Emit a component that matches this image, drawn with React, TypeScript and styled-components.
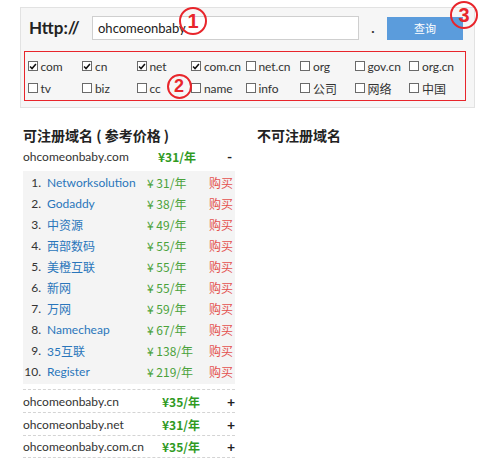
import React from "react";
import styled, { createGlobalStyle } from "styled-components";

const Global = createGlobalStyle`
  html, body { margin: 0; padding: 0; background: #fff; }
  body { font-family: Lato, "Noto Sans CJK SC", sans-serif; color: #333; }
  * { box-sizing: border-box; }
`;

const Page = styled.div`
  width: 480px;
  height: 469px;
  padding: 7px 5px 0 20px;
  position: relative;
  overflow: hidden;
`;

const Panel = styled.div`
  position: relative;
  height: 101px;
  background: #f6f6f6;
  border: 1px solid #e2e2e2;
  padding-top: 8px;
`;

const TopRow = styled.div`
  display: flex;
  align-items: center;
  height: 24px;
  padding-left: 8px;
`;

const HttpLabel = styled.div`
  width: 63px;
  font-family: Lato, sans-serif;
  font-weight: 700;
  font-size: 17px;
  color: #222;
  line-height: 24px;
`;

const Input = styled.div`
  width: 267px;
  height: 24px;
  background: #fff;
  border: 1px solid #cfcfcf;
  font-size: 13px;
  line-height: 22px;
  padding-left: 5px;
  color: #222;
`;

const Dot = styled.div`
  width: 28px;
  text-align: center;
  font-size: 14px;
  font-weight: 700;
  line-height: 24px;
  color: #333;
`;

const SearchButton = styled.div`
  width: 76px;
  height: 23px;
  background: #5b9cdc;
  color: #fff;
  font-family: "Noto Sans CJK SC", sans-serif;
  font-size: 11px;
  line-height: 23px;
  text-align: center;
`;

const ExtBox = styled.div`
  margin: 11px 0 0 3px;
  width: 442px;
  height: 50px;
  border: 1.5px solid #e8252b;
  padding: 3px 0 0 2.5px;
  display: grid;
  grid-template-columns: repeat(8, 54.5px);
  grid-auto-rows: 22px;
`;

const Ext = styled.div`
  display: flex;
  align-items: center;
  gap: 3px;
  font-size: 12px;
  letter-spacing: -0.1px;
  color: #333;
  white-space: nowrap;
`;

const Box = styled.span`
  width: 10px;
  height: 10px;
  border: 1px solid #6a6a6a;
  background: #fff;
  display: inline-flex;
  align-items: center;
  justify-content: center;
  flex: none;
`;

const Circle = styled.div<{ $x: number; $y: number; $d: number }>`
  position: absolute;
  left: ${(p) => p.$x - p.$d / 2}px;
  top: ${(p) => p.$y - p.$d / 2}px;
  width: ${(p) => p.$d}px;
  height: ${(p) => p.$d}px;
  border: 2px solid #e8252b;
  border-radius: 50%;
  color: #e8252b;
  font-family: "Liberation Sans", sans-serif;
  font-weight: 700;
  font-size: ${(p) => Math.round(p.$d * 0.7)}px;
  line-height: ${(p) => p.$d - 4}px;
  text-align: center;
`;

const Columns = styled.div`
  display: flex;
  padding-left: 3px;
  margin-top: 17px;
`;

const LeftCol = styled.div`
  width: 212px;
`;

const RightCol = styled.div`
  margin-left: 22px;
`;

const Title = styled.div`
  font-family: "Noto Sans CJK SC", sans-serif;
  font-weight: 700;
  font-size: 14px;
  line-height: 20px;
  color: #222;
`;

const DomainRow = styled.div<{ $dashed?: boolean; $last?: boolean; $priceCol: number }>`
  display: grid;
  grid-template-columns: ${(p) => p.$priceCol}px 1fr 8px;
  align-items: center;
  height: ${(p) => (p.$dashed ? 23 : 22)}px;
  border-top: ${(p) => (p.$dashed ? "1px dashed #d4d4d4" : "none")};
  border-bottom: ${(p) => (p.$last ? "1px dashed #d4d4d4" : "none")};
  font-size: 12px;
  color: #333;
`;

const BoldPrice = styled.span`
  font-family: "Noto Sans CJK SC", sans-serif;
  font-weight: 700;
  font-size: 12px;
  color: #2f9a1f;
`;

const Sign = styled.span`
  font-weight: 700;
  font-size: 14px;
  color: #222;
`;

const PriceBox = styled.div`
  margin-top: 4px;
  background: #f4f4f4;
  padding: 1px 0 2px;
`;

const PriceRow = styled.div`
  display: grid;
  grid-template-columns: 19px 105px 62px 26px;
  align-items: center;
  height: 21px;
  font-size: 12px;
`;

const Num = styled.span`
  text-align: right;
  color: #333;
  padding-right: 1px;
`;

const Registrar = styled.span`
  color: #2a76bb;
  padding-left: 5px;
  white-space: nowrap;
`;

const Price = styled.span`
  color: #4aa23a;
  font-family: "Noto Sans CJK SC", sans-serif;
  font-size: 12px;
`;

const Buy = styled.span`
  color: #e4514e;
  font-family: "Noto Sans CJK SC", sans-serif;
  font-size: 12px;
`;

const DashedList = styled.div`
  margin-top: 5px;
`;

const Check = ({ on }: { on: boolean }) => (
  <Box>
    {on && (
      <svg width="9" height="9" viewBox="0 0 9 9">
        <path d="M1.2 4.6 L3.4 6.8 L7.8 1.6" fill="none" stroke="#111" strokeWidth="1.7" />
      </svg>
    )}
  </Box>
);

const exts = [
  ["com", true], ["cn", true], ["net", true], ["com.cn", true],
  ["net.cn", false], ["org", false], ["gov.cn", false], ["org.cn", false],
  ["tv", false], ["biz", false], ["cc", false], ["name", false],
  ["info", false], ["公司", false], ["网络", false], ["中国", false],
] as const;

const registrars = [
  ["Networksolution", "31"],
  ["Godaddy", "38"],
  ["中资源", "49"],
  ["西部数码", "55"],
  ["美橙互联", "55"],
  ["新网", "55"],
  ["万网", "59"],
  ["Namecheap", "67"],
  ["35互联", "138"],
  ["Register", "219"],
];

const others = [
  ["ohcomeonbaby.cn", "35"],
  ["ohcomeonbaby.net", "31"],
  ["ohcomeonbaby.com.cn", "35"],
];

export default function App() {
  return (
    <>
      <Global />
      <Page>
        <Panel>
          <TopRow>
            <HttpLabel>Http://</HttpLabel>
            <Input>ohcomeonbaby</Input>
            <Dot>.</Dot>
            <SearchButton>查询</SearchButton>
          </TopRow>
          <ExtBox>
            {exts.map(([name, on]) => (
              <Ext key={name}>
                <Check on={on} />
                {name}
              </Ext>
            ))}
          </ExtBox>
        </Panel>
        <Columns>
          <LeftCol>
            <Title>可注册域名 ( 参考价格 )</Title>
            <DomainRow $priceCol={135}>
              <span>ohcomeonbaby.com</span>
              <BoldPrice>¥31/年</BoldPrice>
              <Sign>-</Sign>
            </DomainRow>
            <PriceBox>
              {registrars.map(([name, price], i) => (
                <PriceRow key={name}>
                  <Num>{i + 1}.</Num>
                  <Registrar>{name}</Registrar>
                  <Price>¥ {price}/年</Price>
                  <Buy>购买</Buy>
                </PriceRow>
              ))}
            </PriceBox>
            <DashedList>
              {others.map(([d, p], i) => (
                <DomainRow key={d} $priceCol={139} $dashed $last={i === others.length - 1}>
                  <span>{d}</span>
                  <BoldPrice>¥{p}/年</BoldPrice>
                  <Sign>+</Sign>
                </DomainRow>
              ))}
            </DashedList>
          </LeftCol>
          <RightCol>
            <Title>不可注册域名</Title>
          </RightCol>
        </Columns>
        <Circle $x={193} $y={21} $d={28}>1</Circle>
        <Circle $x={179} $y={86} $d={25}>2</Circle>
        <Circle $x={464} $y={15} $d={28}>3</Circle>
      </Page>
    </>
  );
}
